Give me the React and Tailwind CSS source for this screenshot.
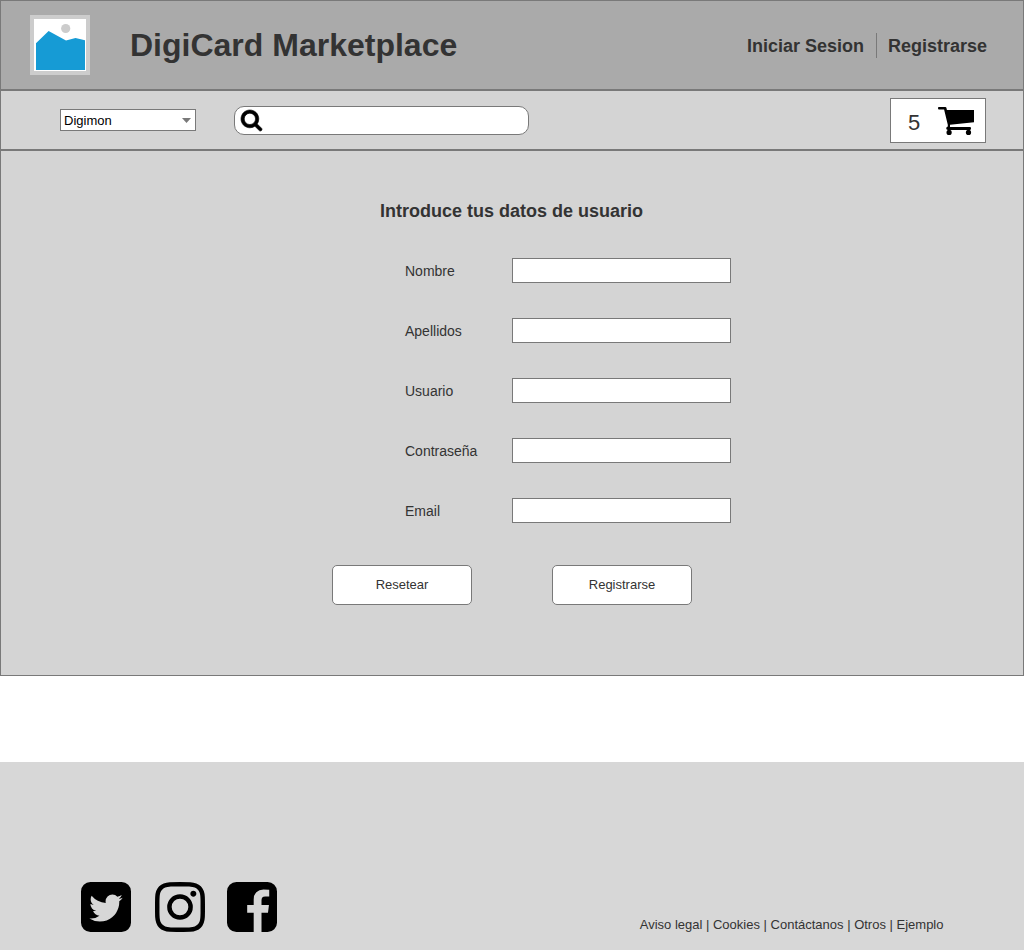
const FIELDS = ["Nombre", "Apellidos", "Usuario", "Contraseña", "Email"];

function LogoImage() {
  return (
    <svg className="size-[60px]" viewBox="0 0 60 60" aria-hidden="true">
      <rect width="60" height="60" fill="#cccccc" />
      <rect x="4" y="4" width="52" height="52" fill="#ffffff" />
      <circle cx="35.7" cy="13.5" r="4.6" fill="#cccccc" />
      <path d="M6 28.2 18.6 16 36 25.6 45.5 23 55 25.2V55H6z" fill="#169bd5" />
    </svg>
  );
}

function SearchIcon() {
  return (
    <svg
      className="size-[21px] overflow-visible stroke-black"
      viewBox="64 128 1664 1664"
      strokeWidth="50"
      aria-hidden="true"
    >
      <path d="M1216 832q0-185-131.5-316.5t-316.5-131.5-316.5 131.5-131.5 316.5 131.5 316.5 316.5 131.5 316.5-131.5 131.5-316.5zm512 832q0 52-38 90t-90 38q-54 0-90-38l-343-342q-179 124-399 124-143 0-273.5-55.5t-225-150-150-225-55.5-273.5 55.5-273.5 150-225 225-150 273.5-55.5 273.5 55.5 225 150 150 225 55.5 273.5q0 220-124 399l343 343q37 37 37 90z" />
    </svg>
  );
}

function CartIcon() {
  return (
    <svg className="h-7 w-9" viewBox="0 0 36 28" aria-hidden="true">
      <path d="M1 0H7.3Q8.2 0 8.4 .8L8.9 3H36V15.2L12 17.8V20H32Q33 20 33 21.4T32 23H10Q8.2 23 8.2 21.3 8.2 20.4 9.8 19.6V17.8L6.1 2.5H1Q0 2.5 0 1.2T1 0Z" />
      <circle cx="11.1" cy="25.4" r="2.6" />
      <circle cx="30.5" cy="25.4" r="2.6" />
    </svg>
  );
}

function TwitterIcon() {
  return (
    <svg className="size-[50px]" viewBox="0 128 1536 1536" aria-hidden="true">
      <path d="M1280 610q-56 25-121 34 68-40 93-117-65 38-134 51-61-66-153-66-87 0-148.5 61.5t-61.5 148.5q0 29 5 48-129-7-242-65t-192-155q-29 50-29 106 0 114 91 175-47-1-100-26v2q0 75 50 133.5t123 72.5q-29 8-51 8-13 0-39-4 21 63 74.5 104t121.5 42q-116 90-261 90-26 0-50-3 148 94 322 94 112 0 210-35.5t168-95 120.5-137 75-162 24.5-168.5q0-18-1-27 63-45 105-109zm256-194v960q0 119-84.5 203.5t-203.5 84.5h-960q-119 0-203.5-84.5t-84.5-203.5v-960q0-119 84.5-203.5t203.5-84.5h960q119 0 203.5 84.5t84.5 203.5z" />
    </svg>
  );
}

function InstagramIcon() {
  return (
    <svg className="size-[50px]" viewBox="0 128 1536 1536" aria-hidden="true">
      <path d="M1024 896q0-106-75-181t-181-75-181 75-75 181 75 181 181 75 181-75 75-181zm138 0q0 164-115 279t-279 115-279-115-115-279 115-279 279-115 279 115 115 279zm108-410q0 38-27 65t-65 27-65-27-27-65 27-65 65-27 65 27 27 65zm-502-220q-7 0-76.5-.5t-105.5 0-96.5 3-103 10-71.5 18.5q-50 20-88 58t-58 88q-11 29-18.5 71.5t-10 103-3 96.5 0 105.5.5 76.5-.5 76.5 0 105.5 3 96.5 10 103 18.5 71.5q20 50 58 88t88 58q29 11 71.5 18.5t103 10 96.5 3 105.5 0 76.5-.5 76.5.5 105.5 0 96.5-3 103-10 71.5-18.5q50-20 88-58t58-88q11-29 18.5-71.5t10-103 3-96.5 0-105.5-.5-76.5.5-76.5 0-105.5-3-96.5-10-103-18.5-71.5q-20-50-58-88t-88-58q-29-11-71.5-18.5t-103-10-96.5-3-105.5 0-76.5.5zm768 630q0 229-5 317-10 208-124 322t-322 124q-88 5-317 5t-317-5q-208-10-322-124t-124-322q-5-88-5-317t5-317q10-208 124-322t322-124q88-5 317-5t317 5q208 10 322 124t124 322q5 88 5 317z" />
    </svg>
  );
}

function FacebookIcon() {
  return (
    <svg className="size-[50px]" viewBox="0 128 1536 1536" aria-hidden="true">
      <path d="M1248 128q119 0 203.5 84.5t84.5 203.5v960q0 119-84.5 203.5t-203.5 84.5h-188v-595h199l30-232h-229v-148q0-56 23.5-84t91.5-28l122-1v-207q-63-9-178-9-136 0-217.5 80t-81.5 226v171h-200v232h200v595h-532q-119 0-203.5-84.5t-84.5-203.5v-960q0-119 84.5-203.5t203.5-84.5h960z" />
    </svg>
  );
}

function Header() {
  return (
    <header className="flex h-[90px] items-center border border-[#797979] bg-[#aaaaaa] pr-9 pl-[29px]">
      <LogoImage />
      <h1 className="ml-10 text-[32px] leading-9 font-bold">DigiCard Marketplace</h1>
      <nav className="ml-auto flex items-center text-lg leading-5 font-bold">
        <a className="pt-0.5">Iniciar Sesion</a>
        <span className="mr-[11px] ml-3 h-[25px] w-px bg-[#797979]" />
        <a className="pt-0.5">Registrarse</a>
      </nav>
    </header>
  );
}

function Toolbar() {
  return (
    <div className="flex h-[60px] items-center border border-[#797979] bg-[#d4d4d4] pr-[37px] pl-[59px]">
      <div className="flex h-[22px] w-[136px] items-center justify-between border border-[#797979] bg-white pr-1 pl-[3px] text-[13px] leading-4 text-black">
        <span className="pt-0.5">Digimon</span>
        <svg className="mt-px h-[5px] w-[9px]" viewBox="0 0 9 5" aria-hidden="true">
          <path d="M0 0H9L4.5 5Z" fill="#797979" />
        </svg>
      </div>
      <div className="ml-[38px] flex h-[29px] w-[295px] items-center rounded-[10px] border border-[#797979] bg-white pl-1.5">
        <SearchIcon />
      </div>
      <div className="ml-auto flex h-[45px] w-24 items-center border border-[#797979] bg-white pr-[11px] pl-[17px]">
        <span className="mt-[5px] text-[22px] leading-6">5</span>
        <span className="mt-px ml-auto pt-px">
          <CartIcon />
        </span>
      </div>
    </div>
  );
}

function RegisterForm() {
  return (
    <main className="h-[526px] border border-[#797979] bg-[#d4d4d4] pt-[50px]">
      <h2 className="ml-[379px] text-lg leading-5 font-bold">Introduce tus datos de usuario</h2>
      <div className="mt-[37px] ml-[404px] flex flex-col gap-[35px]">
        {FIELDS.map((field) => (
          <label key={field} className="flex h-[25px] items-center text-sm leading-4">
            <span className="w-[107px]">{field}</span>
            <input className="h-[25px] w-[219px] border border-[#797979] bg-white" />
          </label>
        ))}
      </div>
      <div className="mt-[42px] ml-[331px] flex gap-20 text-[13px]">
        <button className="h-10 w-[140px] rounded-[5px] border border-[#797979] bg-white">Resetear</button>
        <button className="h-10 w-[140px] rounded-[5px] border border-[#797979] bg-white">Registrarse</button>
      </div>
    </main>
  );
}

function Footer() {
  return (
    <footer className="mt-[86px] flex h-[188px] items-end justify-between bg-[#d7d7d7] pr-[80.5px] pb-[18px] pl-[81px]">
      <div className="flex">
        <TwitterIcon />
        <span className="ml-6">
          <InstagramIcon />
        </span>
        <span className="ml-[22px]">
          <FacebookIcon />
        </span>
      </div>
      <p className="text-[13px] leading-[15px]">Aviso legal | Cookies | Contáctanos | Otros | Ejemplo</p>
    </footer>
  );
}

export default function App() {
  return (
    <div className="h-[950px] w-[1024px] overflow-hidden bg-white font-['Liberation_Sans',Arial,sans-serif] text-[#333333]">
      <Header />
      <Toolbar />
      <RegisterForm />
      <Footer />
    </div>
  );
}
